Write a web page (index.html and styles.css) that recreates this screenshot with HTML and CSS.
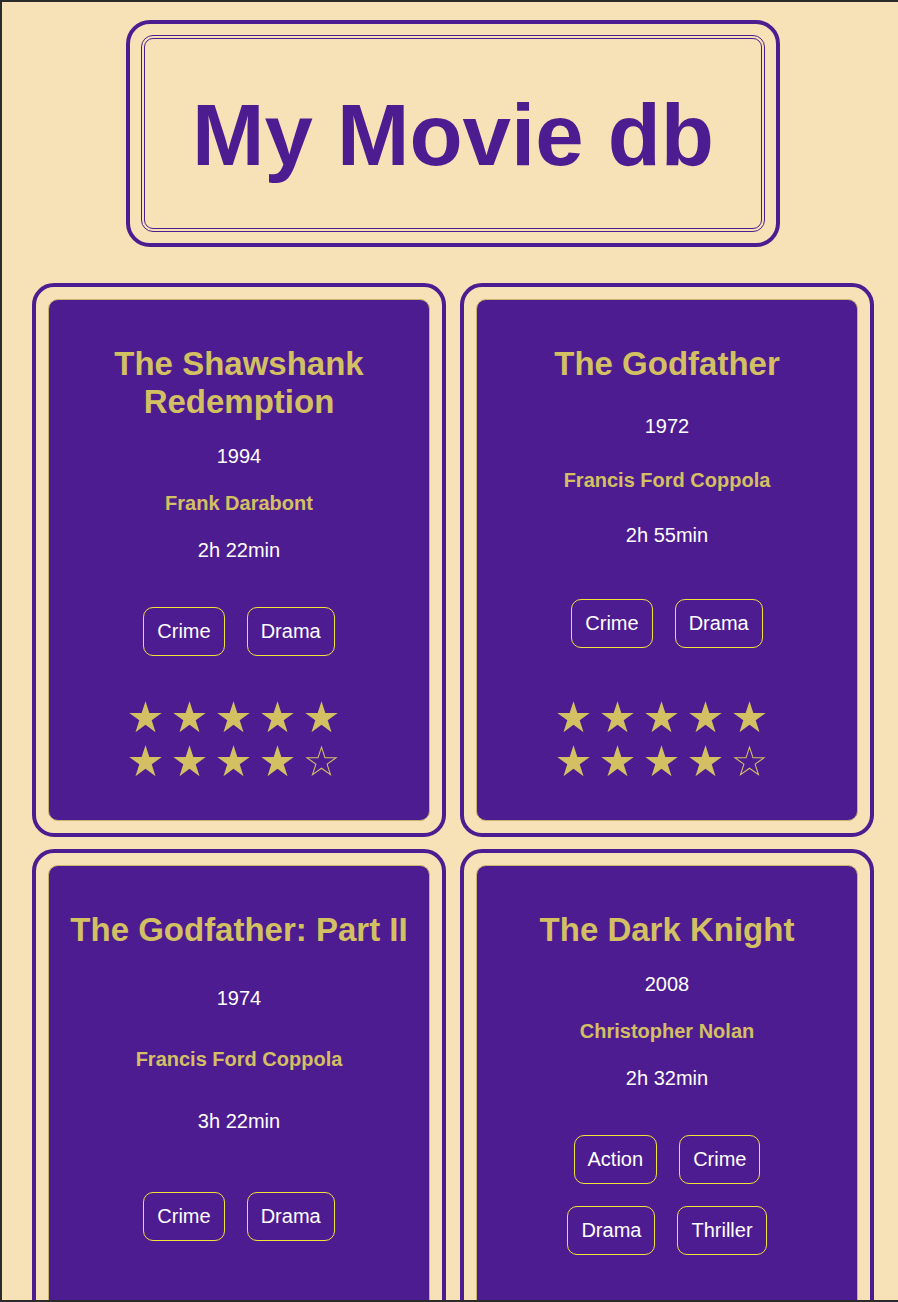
FILE: index.html
```html
<!DOCTYPE html>
<html lang="en">
<head>
<meta charset="utf-8">
<title>My Movie db</title>
<link rel="stylesheet" href="styles.css">
</head>
<body>
<div class="frame"></div>
<main class="page">
  <header class="header">
    <div class="header-inner">
      <h1 class="site-title">My Movie db</h1>
    </div>
  </header>

  <section class="grid">
    <article class="card">
      <div class="card-inner">
        <h2 class="movie-title">The Shawshank Redemption</h2>
        <p class="year">1994</p>
        <p class="director">Frank Darabont</p>
        <p class="runtime">2h 22min</p>
        <ul class="tags">
          <li class="tag">Crime</li>
          <li class="tag">Drama</li>
        </ul>
        <div class="rating">
          <div class="stars">
            <svg class="star" viewBox="-0.6 -0.2 34.2 33"><polygon points="16.5,0 20.47,12.23 33.33,12.23 22.93,19.79 26.9,32.02 16.5,24.46 6.1,32.02 10.07,19.79 -0.33,12.23 12.53,12.23"/></svg>
            <svg class="star" viewBox="-0.6 -0.2 34.2 33"><polygon points="16.5,0 20.47,12.23 33.33,12.23 22.93,19.79 26.9,32.02 16.5,24.46 6.1,32.02 10.07,19.79 -0.33,12.23 12.53,12.23"/></svg>
            <svg class="star" viewBox="-0.6 -0.2 34.2 33"><polygon points="16.5,0 20.47,12.23 33.33,12.23 22.93,19.79 26.9,32.02 16.5,24.46 6.1,32.02 10.07,19.79 -0.33,12.23 12.53,12.23"/></svg>
            <svg class="star" viewBox="-0.6 -0.2 34.2 33"><polygon points="16.5,0 20.47,12.23 33.33,12.23 22.93,19.79 26.9,32.02 16.5,24.46 6.1,32.02 10.07,19.79 -0.33,12.23 12.53,12.23"/></svg>
            <svg class="star" viewBox="-0.6 -0.2 34.2 33"><polygon points="16.5,0 20.47,12.23 33.33,12.23 22.93,19.79 26.9,32.02 16.5,24.46 6.1,32.02 10.07,19.79 -0.33,12.23 12.53,12.23"/></svg>
          </div>
          <div class="stars">
            <svg class="star" viewBox="-0.6 -0.2 34.2 33"><polygon points="16.5,0 20.47,12.23 33.33,12.23 22.93,19.79 26.9,32.02 16.5,24.46 6.1,32.02 10.07,19.79 -0.33,12.23 12.53,12.23"/></svg>
            <svg class="star" viewBox="-0.6 -0.2 34.2 33"><polygon points="16.5,0 20.47,12.23 33.33,12.23 22.93,19.79 26.9,32.02 16.5,24.46 6.1,32.02 10.07,19.79 -0.33,12.23 12.53,12.23"/></svg>
            <svg class="star" viewBox="-0.6 -0.2 34.2 33"><polygon points="16.5,0 20.47,12.23 33.33,12.23 22.93,19.79 26.9,32.02 16.5,24.46 6.1,32.02 10.07,19.79 -0.33,12.23 12.53,12.23"/></svg>
            <svg class="star" viewBox="-0.6 -0.2 34.2 33"><polygon points="16.5,0 20.47,12.23 33.33,12.23 22.93,19.79 26.9,32.02 16.5,24.46 6.1,32.02 10.07,19.79 -0.33,12.23 12.53,12.23"/></svg>
            <svg class="star star-empty" viewBox="-0.6 -0.2 34.2 33"><polygon points="16.5,2 20.1,12.9 31.6,12.9 22.3,19.6 25.8,30.5 16.5,23.8 7.2,30.5 10.7,19.6 1.4,12.9 12.9,12.9"/></svg>
          </div>
        </div>
      </div>
    </article>

    <article class="card">
      <div class="card-inner">
        <h2 class="movie-title">The Godfather</h2>
        <p class="year">1972</p>
        <p class="director">Francis Ford Coppola</p>
        <p class="runtime">2h 55min</p>
        <ul class="tags">
          <li class="tag">Crime</li>
          <li class="tag">Drama</li>
        </ul>
        <div class="rating">
          <div class="stars">
            <svg class="star" viewBox="-0.6 -0.2 34.2 33"><polygon points="16.5,0 20.47,12.23 33.33,12.23 22.93,19.79 26.9,32.02 16.5,24.46 6.1,32.02 10.07,19.79 -0.33,12.23 12.53,12.23"/></svg>
            <svg class="star" viewBox="-0.6 -0.2 34.2 33"><polygon points="16.5,0 20.47,12.23 33.33,12.23 22.93,19.79 26.9,32.02 16.5,24.46 6.1,32.02 10.07,19.79 -0.33,12.23 12.53,12.23"/></svg>
            <svg class="star" viewBox="-0.6 -0.2 34.2 33"><polygon points="16.5,0 20.47,12.23 33.33,12.23 22.93,19.79 26.9,32.02 16.5,24.46 6.1,32.02 10.07,19.79 -0.33,12.23 12.53,12.23"/></svg>
            <svg class="star" viewBox="-0.6 -0.2 34.2 33"><polygon points="16.5,0 20.47,12.23 33.33,12.23 22.93,19.79 26.9,32.02 16.5,24.46 6.1,32.02 10.07,19.79 -0.33,12.23 12.53,12.23"/></svg>
            <svg class="star" viewBox="-0.6 -0.2 34.2 33"><polygon points="16.5,0 20.47,12.23 33.33,12.23 22.93,19.79 26.9,32.02 16.5,24.46 6.1,32.02 10.07,19.79 -0.33,12.23 12.53,12.23"/></svg>
          </div>
          <div class="stars">
            <svg class="star" viewBox="-0.6 -0.2 34.2 33"><polygon points="16.5,0 20.47,12.23 33.33,12.23 22.93,19.79 26.9,32.02 16.5,24.46 6.1,32.02 10.07,19.79 -0.33,12.23 12.53,12.23"/></svg>
            <svg class="star" viewBox="-0.6 -0.2 34.2 33"><polygon points="16.5,0 20.47,12.23 33.33,12.23 22.93,19.79 26.9,32.02 16.5,24.46 6.1,32.02 10.07,19.79 -0.33,12.23 12.53,12.23"/></svg>
            <svg class="star" viewBox="-0.6 -0.2 34.2 33"><polygon points="16.5,0 20.47,12.23 33.33,12.23 22.93,19.79 26.9,32.02 16.5,24.46 6.1,32.02 10.07,19.79 -0.33,12.23 12.53,12.23"/></svg>
            <svg class="star" viewBox="-0.6 -0.2 34.2 33"><polygon points="16.5,0 20.47,12.23 33.33,12.23 22.93,19.79 26.9,32.02 16.5,24.46 6.1,32.02 10.07,19.79 -0.33,12.23 12.53,12.23"/></svg>
            <svg class="star star-empty" viewBox="-0.6 -0.2 34.2 33"><polygon points="16.5,2 20.1,12.9 31.6,12.9 22.3,19.6 25.8,30.5 16.5,23.8 7.2,30.5 10.7,19.6 1.4,12.9 12.9,12.9"/></svg>
          </div>
        </div>
      </div>
    </article>

    <article class="card">
      <div class="card-inner">
        <h2 class="movie-title">The Godfather: Part II</h2>
        <p class="year">1974</p>
        <p class="director">Francis Ford Coppola</p>
        <p class="runtime">3h 22min</p>
        <ul class="tags">
          <li class="tag">Crime</li>
          <li class="tag">Drama</li>
        </ul>
        <div class="rating">
          <div class="stars">
            <svg class="star" viewBox="-0.6 -0.2 34.2 33"><polygon points="16.5,0 20.47,12.23 33.33,12.23 22.93,19.79 26.9,32.02 16.5,24.46 6.1,32.02 10.07,19.79 -0.33,12.23 12.53,12.23"/></svg>
            <svg class="star" viewBox="-0.6 -0.2 34.2 33"><polygon points="16.5,0 20.47,12.23 33.33,12.23 22.93,19.79 26.9,32.02 16.5,24.46 6.1,32.02 10.07,19.79 -0.33,12.23 12.53,12.23"/></svg>
            <svg class="star" viewBox="-0.6 -0.2 34.2 33"><polygon points="16.5,0 20.47,12.23 33.33,12.23 22.93,19.79 26.9,32.02 16.5,24.46 6.1,32.02 10.07,19.79 -0.33,12.23 12.53,12.23"/></svg>
            <svg class="star" viewBox="-0.6 -0.2 34.2 33"><polygon points="16.5,0 20.47,12.23 33.33,12.23 22.93,19.79 26.9,32.02 16.5,24.46 6.1,32.02 10.07,19.79 -0.33,12.23 12.53,12.23"/></svg>
            <svg class="star" viewBox="-0.6 -0.2 34.2 33"><polygon points="16.5,0 20.47,12.23 33.33,12.23 22.93,19.79 26.9,32.02 16.5,24.46 6.1,32.02 10.07,19.79 -0.33,12.23 12.53,12.23"/></svg>
          </div>
          <div class="stars">
            <svg class="star" viewBox="-0.6 -0.2 34.2 33"><polygon points="16.5,0 20.47,12.23 33.33,12.23 22.93,19.79 26.9,32.02 16.5,24.46 6.1,32.02 10.07,19.79 -0.33,12.23 12.53,12.23"/></svg>
            <svg class="star" viewBox="-0.6 -0.2 34.2 33"><polygon points="16.5,0 20.47,12.23 33.33,12.23 22.93,19.79 26.9,32.02 16.5,24.46 6.1,32.02 10.07,19.79 -0.33,12.23 12.53,12.23"/></svg>
            <svg class="star" viewBox="-0.6 -0.2 34.2 33"><polygon points="16.5,0 20.47,12.23 33.33,12.23 22.93,19.79 26.9,32.02 16.5,24.46 6.1,32.02 10.07,19.79 -0.33,12.23 12.53,12.23"/></svg>
            <svg class="star" viewBox="-0.6 -0.2 34.2 33"><polygon points="16.5,0 20.47,12.23 33.33,12.23 22.93,19.79 26.9,32.02 16.5,24.46 6.1,32.02 10.07,19.79 -0.33,12.23 12.53,12.23"/></svg>
            <svg class="star" viewBox="-0.6 -0.2 34.2 33"><polygon points="16.5,0 20.47,12.23 33.33,12.23 22.93,19.79 26.9,32.02 16.5,24.46 6.1,32.02 10.07,19.79 -0.33,12.23 12.53,12.23"/></svg>
          </div>
        </div>
      </div>
    </article>

    <article class="card">
      <div class="card-inner">
        <h2 class="movie-title">The Dark Knight</h2>
        <p class="year">2008</p>
        <p class="director">Christopher Nolan</p>
        <p class="runtime">2h 32min</p>
        <ul class="tags">
          <li class="tag">Action</li>
          <li class="tag">Crime</li>
          <li class="tag">Drama</li>
          <li class="tag">Thriller</li>
        </ul>
        <div class="rating">
          <div class="stars">
            <svg class="star" viewBox="-0.6 -0.2 34.2 33"><polygon points="16.5,0 20.47,12.23 33.33,12.23 22.93,19.79 26.9,32.02 16.5,24.46 6.1,32.02 10.07,19.79 -0.33,12.23 12.53,12.23"/></svg>
            <svg class="star" viewBox="-0.6 -0.2 34.2 33"><polygon points="16.5,0 20.47,12.23 33.33,12.23 22.93,19.79 26.9,32.02 16.5,24.46 6.1,32.02 10.07,19.79 -0.33,12.23 12.53,12.23"/></svg>
            <svg class="star" viewBox="-0.6 -0.2 34.2 33"><polygon points="16.5,0 20.47,12.23 33.33,12.23 22.93,19.79 26.9,32.02 16.5,24.46 6.1,32.02 10.07,19.79 -0.33,12.23 12.53,12.23"/></svg>
            <svg class="star" viewBox="-0.6 -0.2 34.2 33"><polygon points="16.5,0 20.47,12.23 33.33,12.23 22.93,19.79 26.9,32.02 16.5,24.46 6.1,32.02 10.07,19.79 -0.33,12.23 12.53,12.23"/></svg>
            <svg class="star" viewBox="-0.6 -0.2 34.2 33"><polygon points="16.5,0 20.47,12.23 33.33,12.23 22.93,19.79 26.9,32.02 16.5,24.46 6.1,32.02 10.07,19.79 -0.33,12.23 12.53,12.23"/></svg>
          </div>
          <div class="stars">
            <svg class="star" viewBox="-0.6 -0.2 34.2 33"><polygon points="16.5,0 20.47,12.23 33.33,12.23 22.93,19.79 26.9,32.02 16.5,24.46 6.1,32.02 10.07,19.79 -0.33,12.23 12.53,12.23"/></svg>
            <svg class="star" viewBox="-0.6 -0.2 34.2 33"><polygon points="16.5,0 20.47,12.23 33.33,12.23 22.93,19.79 26.9,32.02 16.5,24.46 6.1,32.02 10.07,19.79 -0.33,12.23 12.53,12.23"/></svg>
            <svg class="star" viewBox="-0.6 -0.2 34.2 33"><polygon points="16.5,0 20.47,12.23 33.33,12.23 22.93,19.79 26.9,32.02 16.5,24.46 6.1,32.02 10.07,19.79 -0.33,12.23 12.53,12.23"/></svg>
            <svg class="star" viewBox="-0.6 -0.2 34.2 33"><polygon points="16.5,0 20.47,12.23 33.33,12.23 22.93,19.79 26.9,32.02 16.5,24.46 6.1,32.02 10.07,19.79 -0.33,12.23 12.53,12.23"/></svg>
            <svg class="star" viewBox="-0.6 -0.2 34.2 33"><polygon points="16.5,0 20.47,12.23 33.33,12.23 22.93,19.79 26.9,32.02 16.5,24.46 6.1,32.02 10.07,19.79 -0.33,12.23 12.53,12.23"/></svg>
          </div>
        </div>
      </div>
    </article>
  </section>
</main>
</body>
</html>
```

FILE: styles.css
```css
html {
  background: #f7e2b7;
}

body {
  margin: 0;
  font-family: "Liberation Sans", Arial, Helvetica, sans-serif;
  color: #ffffff;
}

.frame {
  position: fixed;
  top: 0;
  left: 0;
  right: 0;
  bottom: 0;
  border: 2px solid #2b2b2b;
  border-right: 0;
  pointer-events: none;
  z-index: 10;
}

.page {
  width: 842px;
  margin: 0 0 0 32px;
  padding: 20px 0 40px;
}

.header {
  box-sizing: border-box;
  width: 654px;
  margin: 0 auto 36px;
  padding: 11px;
  border: 4px solid #4e1c91;
  border-radius: 24px;
}

.header-inner {
  border: 4px double #4e1c91;
  border-radius: 12px;
  padding: 46px 0 43px;
  text-align: center;
}

.site-title {
  margin: 0;
  font-size: 87px;
  font-weight: 700;
  line-height: normal;
  color: #4e1c91;
}

.grid {
  display: grid;
  grid-template-columns: 414px 414px;
  column-gap: 14px;
  row-gap: 12px;
}

.card {
  box-sizing: border-box;
  border: 4px solid #4e1c91;
  border-radius: 22px;
  padding: 12px;
  display: flex;
}

.card-inner {
  flex: 1;
  background: #4e1c91;
  border: 1px solid #c9b36e;
  border-radius: 10px;
  padding: 20px 18px;
  display: flex;
  flex-direction: column;
  justify-content: space-between;
  align-items: center;
  text-align: center;
}

.movie-title {
  margin: 25px 0 24px;
  font-size: 33px;
  font-weight: 700;
  line-height: normal;
  color: #d3c063;
}

.year,
.director,
.runtime {
  margin: 0 0 24px;
  font-size: 20px;
  line-height: 23px;
}

.director {
  font-weight: 700;
  color: #d3c063;
}

.runtime {
  margin-bottom: 45px;
}

.tags {
  list-style: none;
  margin: 0 0 39px;
  padding: 0;
  max-width: 260px;
  display: flex;
  flex-wrap: wrap;
  justify-content: center;
  gap: 22px;
}

.tag {
  padding: 12px 13px;
  border: 1px solid #f2e23a;
  border-radius: 10px;
  font-size: 20px;
  line-height: 23px;
  color: #ffffff;
}

.rating {
  margin-bottom: 17px;
  display: flex;
  flex-direction: column;
  align-items: center;
}

.stars {
  height: 44px;
  display: flex;
  align-items: center;
}

.star {
  width: 33px;
  height: 32px;
  margin-right: 11px;
  fill: #d3c063;
}

.star-empty {
  fill: none;
  stroke: #d3c063;
  stroke-width: 1.1;
}
```
